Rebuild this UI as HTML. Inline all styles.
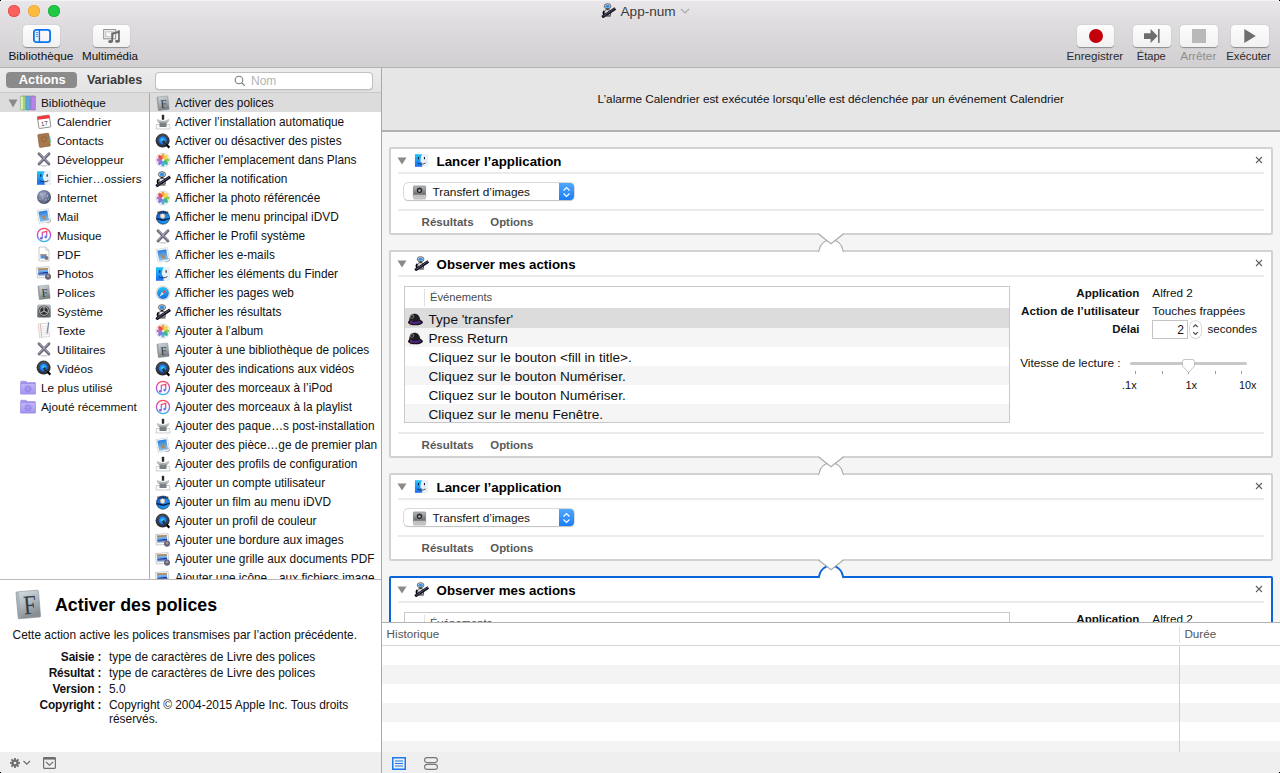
<!DOCTYPE html>
<html><head><meta charset="utf-8"><title>App-num</title>
<style>
html,body{margin:0;padding:0}
body{width:1280px;height:773px;position:relative;overflow:hidden;background:#fff;font-family:"Liberation Sans",sans-serif;-webkit-font-smoothing:antialiased}
.t{position:absolute;white-space:nowrap}
</style></head><body>
<svg width="0" height="0" style="position:absolute"><defs>
<linearGradient id="gF" x1="0" y1="0" x2="0.3" y2="1"><stop offset="0" stop-color="#d0d8dc"/><stop offset="0.6" stop-color="#a6aeb2"/><stop offset="1" stop-color="#7c8387"/></linearGradient>
<linearGradient id="gFinder" x1="0" y1="0" x2="0" y2="1"><stop offset="0" stop-color="#22c4fa"/><stop offset="1" stop-color="#1b6cf0"/></linearGradient>
<radialGradient id="gGlobe" cx="0.4" cy="0.35" r="0.7"><stop offset="0" stop-color="#a8b2cc"/><stop offset="0.6" stop-color="#6a7494"/><stop offset="1" stop-color="#3c4258"/></radialGradient>
<linearGradient id="gMail" x1="0" y1="0" x2="0" y2="1"><stop offset="0" stop-color="#2a7fd8"/><stop offset="1" stop-color="#8cc6f4"/></linearGradient>
<linearGradient id="gTunes" x1="0" y1="0" x2="0" y2="1"><stop offset="0" stop-color="#fa4a5a"/><stop offset="0.5" stop-color="#c24ae0"/><stop offset="1" stop-color="#28b8f0"/></linearGradient>
<radialGradient id="gQt" cx="0.5" cy="0.45" r="0.55"><stop offset="0" stop-color="#40e0ff"/><stop offset="0.7" stop-color="#1a70e8"/><stop offset="1" stop-color="#1a3a80"/></radialGradient>
<radialGradient id="gQtO" cx="0.5" cy="0.4" r="0.6"><stop offset="0" stop-color="#6a6e74"/><stop offset="1" stop-color="#1e2024"/></radialGradient>
<linearGradient id="gSys" x1="0" y1="0" x2="0" y2="1"><stop offset="0" stop-color="#b8c0c4"/><stop offset="1" stop-color="#5a6064"/></linearGradient>
<linearGradient id="gFolder" x1="0" y1="0" x2="0" y2="1"><stop offset="0" stop-color="#c0b6f8"/><stop offset="1" stop-color="#a496ee"/></linearGradient>
<linearGradient id="gSafari" x1="0" y1="0" x2="0" y2="1"><stop offset="0" stop-color="#1cc4f4"/><stop offset="1" stop-color="#1a6ae0"/></linearGradient>
<linearGradient id="gDvd" x1="0" y1="0" x2="1" y2="1"><stop offset="0" stop-color="#0a50e0"/><stop offset="1" stop-color="#20b0f8"/></linearGradient>
<linearGradient id="gInst" x1="0" y1="0" x2="0" y2="1"><stop offset="0" stop-color="#e8ecee"/><stop offset="1" stop-color="#8a9296"/></linearGradient>
<linearGradient id="gPrev" x1="0" y1="0" x2="0" y2="1"><stop offset="0" stop-color="#a8d0f8"/><stop offset="0.5" stop-color="#5a9ae8"/><stop offset="0.55" stop-color="#1a3a9a"/><stop offset="1" stop-color="#d8eef8"/></linearGradient>
<linearGradient id="gBF" x1="0" y1="0" x2="0.3" y2="1"><stop offset="0" stop-color="#d3dde3"/><stop offset="0.55" stop-color="#aeb8be"/><stop offset="1" stop-color="#868e93"/></linearGradient>
</defs></svg>

<div style="position:absolute;left:0px;top:0px;width:1280px;height:67px;background:linear-gradient(#e9e7e9,#dddbdd 40%,#d1cfd1);"></div>
<div style="position:absolute;left:0px;top:0px;width:1280px;height:1px;background:#f4f3f4;"></div>
<div style="position:absolute;left:0px;top:67px;width:1280px;height:1px;background:#b3b3b3;"></div>
<div style="position:absolute;left:8px;top:5px;width:12px;height:12px;border-radius:50%;background:#fc605c;box-shadow:inset 0 0 0 0.6px #e0443e;box-sizing:border-box;"></div>
<div style="position:absolute;left:28px;top:5px;width:12px;height:12px;border-radius:50%;background:#fdbc40;box-shadow:inset 0 0 0 0.6px #dea236;box-sizing:border-box;"></div>
<div style="position:absolute;left:48px;top:5px;width:12px;height:12px;border-radius:50%;background:#1fc845;box-shadow:inset 0 0 0 0.6px #14a82a;box-sizing:border-box;"></div>
<svg style="position:absolute;left:601px;top:3px" width="15" height="15" viewBox="0 0 16 16"><ellipse cx="7" cy="3.4" rx="3.6" ry="2.7" fill="#d8d8d8" stroke="#444" stroke-width="0.8"/><ellipse cx="7" cy="3.4" rx="2.3" ry="1.6" fill="#2b8ff0"/><rect x="5.8" y="6" width="2.4" height="1.4" fill="#111"/><path d="M4 9c0-1.2 1-1.8 3-1.8s3.2.6 3.2 1.8v4H4z" fill="#e8e8ee" stroke="#222" stroke-width="0.8"/><path d="M3.6 8.3c-1.4 1-1.6 3.4-.2 4.6" fill="none" stroke="#000" stroke-width="1.6"/><path d="M1.2 15.2L15.2 5.8" stroke="#0e0e18" stroke-width="3"/><path d="M2 14.3L14.6 5.8" stroke="#7a7ab0" stroke-width="0.7"/><path d="M4.5 14h6" stroke="#444" stroke-width="1"/></svg>
<div class="t" style="left:620.5px;top:5.19px;font-size:13.6px;line-height:13.6px;color:#3b3b3b;">App-num</div>
<svg style="position:absolute;left:680px;top:8px" width="10" height="6" viewBox="0 0 10 6"><path d="M1 1l4 4 4-4" fill="none" stroke="#a8a8a8" stroke-width="1.1"/></svg>
<div style="position:absolute;left:22.5px;top:25px;width:37.5px;height:22px;box-sizing:border-box;border-radius:4px;background:linear-gradient(#fdfdfd,#f1f1f1);box-shadow:0 0.5px 1px rgba(0,0,0,0.35);"></div>
<div style="position:absolute;left:92.5px;top:25px;width:37.5px;height:22px;box-sizing:border-box;border-radius:4px;background:linear-gradient(#fdfdfd,#f1f1f1);box-shadow:0 0.5px 1px rgba(0,0,0,0.35);"></div>
<svg style="position:absolute;left:33px;top:29px" width="18" height="14" viewBox="0 0 18 14"><rect x="0.9" y="0.9" width="16.2" height="12.2" rx="2.4" fill="none" stroke="#0a74f4" stroke-width="1.8"/><line x1="6.4" y1="1" x2="6.4" y2="13" stroke="#0a74f4" stroke-width="1.4"/><g stroke="#2a84f0" stroke-width="0.9" stroke-linecap="round"><line x1="3.2" y1="3.6" x2="4.6" y2="3.6"/><line x1="3.2" y1="5.6" x2="4.6" y2="5.6"/><line x1="3.2" y1="7.6" x2="4.6" y2="7.6"/></g></svg>
<svg style="position:absolute;left:100px;top:27px" width="22" height="17" viewBox="0 0 22 17"><rect x="3.7" y="2.6" width="12" height="9.2" fill="none" stroke="#8a8a8a" stroke-width="1"/><rect x="5.8" y="4.8" width="7.8" height="5" fill="none" stroke="#c0c0c0" stroke-width="1"/><path d="M11.3 5.6L19.8 3.2V6L11.3 8.3z" fill="#6a6a6a" stroke="#f2f2f2" stroke-width="0.4"/><rect x="11.3" y="6" width="1.8" height="8.6" fill="#6a6a6a"/><rect x="18.1" y="3.4" width="1.7" height="10.8" fill="#6a6a6a"/><ellipse cx="10.5" cy="14.6" rx="2.4" ry="1.5" fill="#6a6a6a"/><ellipse cx="17.4" cy="14.3" rx="2.4" ry="1.5" fill="#6a6a6a"/></svg>
<div class="t" style="left:8.5px;top:51.01px;font-size:11.8px;line-height:11.8px;color:#111;">Bibliothèque</div>
<div class="t" style="left:82px;top:50.48px;font-size:11.6px;line-height:11.6px;color:#111;">Multimédia</div>
<div style="position:absolute;left:1076.5px;top:25px;width:37.5px;height:22px;box-sizing:border-box;border-radius:4px;background:linear-gradient(#fdfdfd,#f1f1f1);box-shadow:0 0.5px 1px rgba(0,0,0,0.35);"></div>
<div style="position:absolute;left:1133px;top:25px;width:37.5px;height:22px;box-sizing:border-box;border-radius:4px;background:linear-gradient(#fdfdfd,#f1f1f1);box-shadow:0 0.5px 1px rgba(0,0,0,0.35);"></div>
<div style="position:absolute;left:1180px;top:25px;width:37.5px;height:22px;box-sizing:border-box;border-radius:4px;background:linear-gradient(#fdfdfd,#f1f1f1);box-shadow:0 0.5px 1px rgba(0,0,0,0.35);"></div>
<div style="position:absolute;left:1231px;top:25px;width:37.5px;height:22px;box-sizing:border-box;border-radius:4px;background:linear-gradient(#fdfdfd,#f1f1f1);box-shadow:0 0.5px 1px rgba(0,0,0,0.35);"></div>
<div style="position:absolute;left:1089px;top:29px;width:14px;height:14px;border-radius:50%;background:#c4000a;"></div>
<svg style="position:absolute;left:1143px;top:29px" width="17" height="14" viewBox="0 0 17 14"><path d="M1 4.2h6.6V0L14.6 7 7.6 14V9.9H1z" fill="#6e6e6e"/><rect x="15.2" y="0" width="1.3" height="14" fill="#555"/></svg>
<div style="position:absolute;left:1192px;top:29px;width:14px;height:14px;background:#b9b9b9;"></div>
<svg style="position:absolute;left:1243.5px;top:29px" width="12" height="14" viewBox="0 0 12 14"><path d="M0.3 0L11.8 7 0.3 14z" fill="#6e6e6e"/></svg>
<div class="t" style="left:1066.5px;top:50.48px;font-size:11.6px;line-height:11.6px;color:#2a2a2a;">Enregistrer</div>
<div class="t" style="left:1136.8px;top:50.90px;font-size:11.1px;line-height:11.1px;color:#2a2a2a;">Étape</div>
<div class="t" style="left:1180.3px;top:51.01px;font-size:11.8px;line-height:11.8px;color:#8e8e8e;">Arrêter</div>
<div class="t" style="left:1226.3px;top:50.73px;font-size:11.3px;line-height:11.3px;color:#2a2a2a;">Exécuter</div>
<div style="position:absolute;left:0px;top:68px;width:381px;height:24px;background:linear-gradient(#ececec,#e3e3e3);"></div>
<div style="position:absolute;left:0px;top:92px;width:381px;height:1px;background:#c9c9c9;"></div>
<div style="position:absolute;left:6px;top:72px;width:70.5px;height:16px;border-radius:4px;background:#8b8b8b;"></div>
<div class="t" style="left:18.8px;top:73.71px;font-size:12.8px;line-height:12.8px;color:#fff;font-weight:bold;">Actions</div>
<div class="t" style="left:86.9px;top:73.88px;font-size:12.6px;line-height:12.6px;color:#3a3a3a;font-weight:bold;">Variables</div>
<div style="position:absolute;left:154.5px;top:71.5px;width:218px;height:18px;box-sizing:border-box;border-radius:4px;background:#fff;border:0.5px solid #c0c0c0;box-shadow:0 0.5px 0.5px rgba(0,0,0,0.15);"></div>
<svg style="position:absolute;left:234px;top:75px" width="12" height="12" viewBox="0 0 12 12"><circle cx="5" cy="5" r="3.8" fill="none" stroke="#7a7a7a" stroke-width="1.1"/><line x1="7.8" y1="7.8" x2="10.8" y2="10.8" stroke="#7a7a7a" stroke-width="1.2"/></svg>
<div class="t" style="left:251px;top:74.84px;font-size:12px;line-height:12px;color:#b4b4b4;">Nom</div>
<div style="position:absolute;left:0px;top:93px;width:149px;height:486px;background:#fff;"></div>
<div style="position:absolute;left:149px;top:93px;width:1px;height:486px;background:#aaaaaa;"></div>
<div style="position:absolute;left:0px;top:93px;width:149px;height:19px;background:#dcdcdc;"></div>
<svg style="position:absolute;left:8px;top:99px" width="10" height="9" viewBox="0 0 10 9"><path d="M0.5 0.5h9L5 8.5z" fill="#8a8a8a"/></svg>
<svg style="position:absolute;left:20px;top:95px" width="16" height="16" viewBox="0 0 16 16"><rect x="0.8" y="1" width="5" height="14" rx="0.6" fill="#9ed57c" stroke="#6f9a52" stroke-width="0.5"/><rect x="1.1" y="1.5" width="1.6" height="13" fill="#eef5b0"/><rect x="6.2" y="1" width="4.2" height="14" rx="0.6" fill="#5ca6e4" stroke="#3c78b0" stroke-width="0.5"/><rect x="10.8" y="1" width="4.6" height="14" rx="0.6" fill="#b884e8" stroke="#8058b0" stroke-width="0.5"/><path d="M1 1.2h14.4" stroke="#999" stroke-width="0.8" stroke-dasharray="0.8 0.8"/></svg>
<div class="t" style="left:41px;top:97.81px;font-size:11.8px;line-height:11.8px;color:#111;">Bibliothèque</div>
<svg style="position:absolute;left:36px;top:113px" width="16" height="16" viewBox="0 0 16 16"><g transform="rotate(-8 8 8)"><rect x="2" y="2.8" width="12" height="12" rx="0.8" fill="#fff" stroke="#6a6a6a" stroke-width="0.7"/><rect x="2" y="2.8" width="12" height="3.2" fill="#f0383a"/><text x="8" y="12.8" font-size="6.2" text-anchor="middle" fill="#333" font-family="Liberation Sans">17</text></g></svg>
<div class="t" style="left:57px;top:116.81px;font-size:11.8px;line-height:11.8px;color:#111;">Calendrier</div>
<svg style="position:absolute;left:36px;top:132px" width="16" height="16" viewBox="0 0 16 16"><g transform="rotate(-8 8 8)"><rect x="2.5" y="1.8" width="11" height="13" rx="0.8" fill="#a8784c" stroke="#80583a" stroke-width="0.6"/><circle cx="8" cy="7.2" r="2.6" fill="none" stroke="#86603e" stroke-width="0.8"/><rect x="13" y="5.5" width="1.6" height="3" fill="#3ab0d8"/><rect x="13" y="8.5" width="1.6" height="3" fill="#58b868"/></g></svg>
<div class="t" style="left:57px;top:135.81px;font-size:11.8px;line-height:11.8px;color:#111;">Contacts</div>
<svg style="position:absolute;left:36px;top:151px" width="16" height="16" viewBox="0 0 16 16"><g stroke="#6a6878" stroke-width="2.8" stroke-linecap="round"><line x1="3" y1="2.8" x2="13" y2="13"/><line x1="13" y1="2.8" x2="3" y2="13"/></g><g stroke="#b8b6d0" stroke-width="0.9"><line x1="3.3" y1="2.5" x2="13.3" y2="12.6"/><line x1="12.7" y1="2.5" x2="2.7" y2="12.6"/></g><ellipse cx="8" cy="14.8" rx="4" ry="0.8" fill="#ccc"/></svg>
<div class="t" style="left:57px;top:154.81px;font-size:11.8px;line-height:11.8px;color:#111;">Développeur</div>
<svg style="position:absolute;left:36px;top:170px" width="16" height="16" viewBox="0 0 16 16"><rect x="1" y="1.2" width="14" height="13.5" fill="#eaf0f6"/><path d="M1 1.2h7.6c-1.4 3-2 6-1.6 8.3h1.2c-.3 1.8.1 3.6.8 5.2H1z" fill="url(#gFinder)"/><rect x="4.2" y="4.3" width="1.1" height="2.4" fill="#0d1830"/><rect x="10.6" y="4.3" width="1.1" height="2.4" fill="#0d1830"/><path d="M3.6 10.6c2.5 1.7 6.3 1.7 8.8 0" fill="none" stroke="#0d1830" stroke-width="0.8"/></svg>
<div class="t" style="left:57px;top:173.81px;font-size:11.8px;line-height:11.8px;color:#111;">Fichier…ossiers</div>
<svg style="position:absolute;left:36px;top:189px" width="16" height="16" viewBox="0 0 16 16"><circle cx="8" cy="8" r="7" fill="url(#gGlobe)"/><g fill="#e0e6f4" opacity="0.8"><circle cx="5" cy="5" r="0.7"/><circle cx="9" cy="4" r="0.6"/><circle cx="11.5" cy="7" r="0.7"/><circle cx="6.5" cy="9" r="0.6"/><circle cx="10" cy="11" r="0.7"/><circle cx="4" cy="10.5" r="0.5"/><circle cx="8" cy="13" r="0.5"/><circle cx="12.5" cy="10" r="0.5"/></g></svg>
<div class="t" style="left:57px;top:192.81px;font-size:11.8px;line-height:11.8px;color:#111;">Internet</div>
<svg style="position:absolute;left:36px;top:208px" width="16" height="16" viewBox="0 0 16 16"><g transform="rotate(-10 8 8)"><rect x="2" y="1.5" width="11.5" height="13" fill="#fff" stroke="#b0b8c0" stroke-width="0.6" stroke-dasharray="1 0.4"/><rect x="3.2" y="2.8" width="9" height="10.4" fill="url(#gMail)"/><path d="M5 6l3 2.5 2-1.5-1 3 2 2.5-3-1.5-2 1 .5-2.5z" fill="#b0885a"/></g><path d="M11 11c2 0 3.5.5 3.5 2s-2 2-4 1.5" fill="none" stroke="#999" stroke-width="0.7"/></svg>
<div class="t" style="left:57px;top:211.81px;font-size:11.8px;line-height:11.8px;color:#111;">Mail</div>
<svg style="position:absolute;left:36px;top:227px" width="16" height="16" viewBox="0 0 16 16"><circle cx="8" cy="8" r="6.6" fill="#fafafa" stroke="url(#gTunes)" stroke-width="1.3"/><path d="M6.3 11.2V5.4l4.4-1.1v5.8" fill="none" stroke="url(#gTunes)" stroke-width="1.2"/><circle cx="5.3" cy="11.2" r="1.3" fill="#9a50e0"/><circle cx="9.7" cy="10.1" r="1.3" fill="#5a80f0"/></svg>
<div class="t" style="left:57px;top:230.81px;font-size:11.8px;line-height:11.8px;color:#111;">Musique</div>
<svg style="position:absolute;left:36px;top:246px" width="16" height="16" viewBox="0 0 16 16"><path d="M3 1h6.8L13 4.2V15H3z" fill="#fff" stroke="#a8a8a8" stroke-width="0.6"/><path d="M9.8 1v3.2H13" fill="#eee" stroke="#a8a8a8" stroke-width="0.5"/><rect x="4.5" y="8" width="6" height="4.5" fill="#5a8ad8"/><rect x="4.5" y="8" width="6" height="1.2" fill="#c09868"/><circle cx="10.5" cy="12" r="2" fill="#777"/></svg>
<div class="t" style="left:57px;top:249.81px;font-size:11.8px;line-height:11.8px;color:#111;">PDF</div>
<svg style="position:absolute;left:36px;top:265px" width="16" height="16" viewBox="0 0 16 16"><g transform="rotate(-4 8 8)"><rect x="1" y="2" width="12.5" height="10.5" fill="#fff" stroke="#aaa" stroke-width="0.6"/><rect x="2.2" y="3.2" width="10" height="8" fill="url(#gPrev)"/><rect x="2.2" y="3.2" width="10" height="1.6" fill="#b08850"/></g><circle cx="12" cy="11.8" r="3" fill="#6a6a6a"/><circle cx="12" cy="11" r="2" fill="#b89078" stroke="#3a5aa0" stroke-width="0.8"/></svg>
<div class="t" style="left:57px;top:268.81px;font-size:11.8px;line-height:11.8px;color:#111;">Photos</div>
<svg style="position:absolute;left:36px;top:284px" width="16" height="16" viewBox="0 0 16 16"><g transform="rotate(-6 8 8)"><rect x="2.5" y="1.5" width="11" height="13.5" rx="0.6" fill="url(#gF)" stroke="#7e8588" stroke-width="0.4"/><rect x="2.5" y="1.5" width="1.4" height="13.5" fill="#8e969a" opacity="0.7"/><text x="8.6" y="12.6" font-size="11" text-anchor="middle" fill="#2b3336" font-family="Liberation Serif">F</text></g></svg>
<div class="t" style="left:57px;top:287.81px;font-size:11.8px;line-height:11.8px;color:#111;">Polices</div>
<svg style="position:absolute;left:36px;top:303px" width="16" height="16" viewBox="0 0 16 16"><rect x="1.2" y="1.5" width="13.6" height="13" rx="1.5" fill="url(#gSys)"/><circle cx="8" cy="8" r="5.6" fill="#2a2c2e"/><circle cx="8" cy="8" r="4.4" fill="none" stroke="#a8aaac" stroke-width="1.3"/><path d="M8 8V4M8 8l3.5 2M8 8l-3.5 2" stroke="#a8aaac" stroke-width="1.2"/></svg>
<div class="t" style="left:57px;top:306.81px;font-size:11.8px;line-height:11.8px;color:#111;">Système</div>
<svg style="position:absolute;left:36px;top:322px" width="16" height="16" viewBox="0 0 16 16"><g transform="rotate(-6 8 8)"><rect x="2.8" y="1.5" width="10" height="13.5" fill="#fbfbfb" stroke="#b8b8b8" stroke-width="0.5"/><g stroke="#d6d6d6" stroke-width="0.5"><line x1="3" y1="4.5" x2="12.6" y2="4.5"/><line x1="3" y1="6.5" x2="12.6" y2="6.5"/><line x1="3" y1="8.5" x2="12.6" y2="8.5"/><line x1="3" y1="10.5" x2="12.6" y2="10.5"/><line x1="3" y1="12.5" x2="12.6" y2="12.5"/></g><line x1="5" y1="1.5" x2="5" y2="15" stroke="#f08a8a" stroke-width="0.6"/><path d="M13.5 1l-3 11" stroke="#6a88a8" stroke-width="1.1"/></g></svg>
<div class="t" style="left:57px;top:325.81px;font-size:11.8px;line-height:11.8px;color:#111;">Texte</div>
<svg style="position:absolute;left:36px;top:341px" width="16" height="16" viewBox="0 0 16 16"><g stroke="#6a6878" stroke-width="2.8" stroke-linecap="round"><line x1="3" y1="2.8" x2="13" y2="13"/><line x1="13" y1="2.8" x2="3" y2="13"/></g><g stroke="#b8b6d0" stroke-width="0.9"><line x1="3.3" y1="2.5" x2="13.3" y2="12.6"/><line x1="12.7" y1="2.5" x2="2.7" y2="12.6"/></g><ellipse cx="8" cy="14.8" rx="4" ry="0.8" fill="#ccc"/></svg>
<div class="t" style="left:57px;top:344.81px;font-size:11.8px;line-height:11.8px;color:#111;">Utilitaires</div>
<svg style="position:absolute;left:36px;top:360px" width="16" height="16" viewBox="0 0 16 16"><circle cx="7.6" cy="7.6" r="7" fill="url(#gQtO)"/><circle cx="7.6" cy="7.6" r="4.4" fill="url(#gQt)"/><path d="M7.8 7.8l2.4 3.4" stroke="#2e3236" stroke-width="2.4"/><path d="M11.4 11.8l3 2.8" stroke="#000" stroke-width="2.2"/></svg>
<div class="t" style="left:57px;top:363.81px;font-size:11.8px;line-height:11.8px;color:#111;">Vidéos</div>
<svg style="position:absolute;left:20px;top:379px" width="16" height="16" viewBox="0 0 16 16"><path d="M0.8 2.2h5.4l1.1 1.3h7.9V15H0.8z" fill="#a597ee" stroke="#8e80e0" stroke-width="0.5"/><rect x="0.8" y="4.6" width="14.4" height="10.4" fill="url(#gFolder)" stroke="#8e80e0" stroke-width="0.5"/><circle cx="8" cy="9.8" r="2.8" fill="none" stroke="#8a7ce6" stroke-width="1.4" stroke-dasharray="1.1 0.7"/><circle cx="8" cy="9.8" r="1.4" fill="none" stroke="#8a7ce6" stroke-width="0.7"/></svg>
<div class="t" style="left:41px;top:382.81px;font-size:11.8px;line-height:11.8px;color:#111;">Le plus utilisé</div>
<svg style="position:absolute;left:20px;top:398px" width="16" height="16" viewBox="0 0 16 16"><path d="M0.8 2.2h5.4l1.1 1.3h7.9V15H0.8z" fill="#a597ee" stroke="#8e80e0" stroke-width="0.5"/><rect x="0.8" y="4.6" width="14.4" height="10.4" fill="url(#gFolder)" stroke="#8e80e0" stroke-width="0.5"/><circle cx="8" cy="9.8" r="2.8" fill="none" stroke="#8a7ce6" stroke-width="1.4" stroke-dasharray="1.1 0.7"/><circle cx="8" cy="9.8" r="1.4" fill="none" stroke="#8a7ce6" stroke-width="0.7"/></svg>
<div class="t" style="left:41px;top:401.81px;font-size:11.8px;line-height:11.8px;color:#111;">Ajouté récemment</div>
<div style="position:absolute;left:150px;top:93px;width:231px;height:486px;background:#fff;"></div>
<div style="position:absolute;left:150px;top:93px;width:231px;height:19px;background:#dcdcdc;"></div>
<div style="position:absolute;left:150px;top:93px;width:231px;height:486px;overflow:hidden">
<svg style="position:absolute;left:5px;top:2px" width="16" height="16" viewBox="0 0 16 16"><g transform="rotate(-6 8 8)"><rect x="2.5" y="1.5" width="11" height="13.5" rx="0.6" fill="url(#gF)" stroke="#7e8588" stroke-width="0.4"/><rect x="2.5" y="1.5" width="1.4" height="13.5" fill="#8e969a" opacity="0.7"/><text x="8.6" y="12.6" font-size="11" text-anchor="middle" fill="#2b3336" font-family="Liberation Serif">F</text></g></svg>
<div class="t" style="left:25px;top:4.77px;font-size:11.85px;line-height:11.85px;color:#111;">Activer des polices</div>
<svg style="position:absolute;left:5px;top:21px" width="16" height="16" viewBox="0 0 16 16"><path d="M1.5 10.5h13l0.5 4.5H1z" fill="#fcfcfc" stroke="#a0a0a0" stroke-width="0.5"/><rect x="4.5" y="7" width="7" height="6" fill="#7a8084"/><rect x="4.5" y="7" width="7" height="2" fill="#a8aeb2"/><path d="M2 5.5L8 7.5l6-2-1 2.5L8 9.5 3 8z" fill="url(#gInst)" stroke="#888" stroke-width="0.4"/><rect x="6.8" y="0.8" width="2.4" height="5" rx="0.6" fill="#2a2a2a"/></svg>
<div class="t" style="left:25px;top:23.77px;font-size:11.85px;line-height:11.85px;color:#111;">Activer l’installation automatique</div>
<svg style="position:absolute;left:5px;top:40px" width="16" height="16" viewBox="0 0 16 16"><circle cx="7.6" cy="7.6" r="7" fill="url(#gQtO)"/><circle cx="7.6" cy="7.6" r="4.4" fill="url(#gQt)"/><path d="M7.8 7.8l2.4 3.4" stroke="#2e3236" stroke-width="2.4"/><path d="M11.4 11.8l3 2.8" stroke="#000" stroke-width="2.2"/></svg>
<div class="t" style="left:25px;top:42.77px;font-size:11.85px;line-height:11.85px;color:#111;">Activer ou désactiver des pistes</div>
<svg style="position:absolute;left:5px;top:59px" width="16" height="16" viewBox="0 0 16 16"><circle cx="8" cy="8" r="7" fill="#f6f6f6" stroke="#c8c8c8" stroke-width="0.6"/><g opacity="0.9"><ellipse cx="8" cy="4.3" rx="1.8" ry="2.7" fill="#f29a2e"/><ellipse cx="8" cy="11.7" rx="1.8" ry="2.7" fill="#3aa8e8"/><ellipse cx="4.3" cy="8" rx="2.7" ry="1.8" fill="#b060c8"/><ellipse cx="11.7" cy="8" rx="2.7" ry="1.8" fill="#7ac83a"/><ellipse cx="5.4" cy="5.4" rx="1.8" ry="2.7" fill="#e83a38" transform="rotate(-45 5.4 5.4)"/><ellipse cx="10.6" cy="5.4" rx="1.8" ry="2.7" fill="#f4d03a" transform="rotate(45 10.6 5.4)"/><ellipse cx="5.4" cy="10.6" rx="1.8" ry="2.7" fill="#7a6ad8" transform="rotate(45 5.4 10.6)"/><ellipse cx="10.6" cy="10.6" rx="1.8" ry="2.7" fill="#2ab088" transform="rotate(-45 10.6 10.6)"/></g></svg>
<div class="t" style="left:25px;top:61.77px;font-size:11.85px;line-height:11.85px;color:#111;">Afficher l’emplacement dans Plans</div>
<svg style="position:absolute;left:5px;top:78px" width="16" height="16" viewBox="0 0 16 16"><ellipse cx="7" cy="3.4" rx="3.6" ry="2.7" fill="#d8d8d8" stroke="#444" stroke-width="0.8"/><ellipse cx="7" cy="3.4" rx="2.3" ry="1.6" fill="#2b8ff0"/><rect x="5.8" y="6" width="2.4" height="1.4" fill="#111"/><path d="M4 9c0-1.2 1-1.8 3-1.8s3.2.6 3.2 1.8v4H4z" fill="#e8e8ee" stroke="#222" stroke-width="0.8"/><path d="M3.6 8.3c-1.4 1-1.6 3.4-.2 4.6" fill="none" stroke="#000" stroke-width="1.6"/><path d="M1.2 15.2L15.2 5.8" stroke="#0e0e18" stroke-width="3"/><path d="M2 14.3L14.6 5.8" stroke="#7a7ab0" stroke-width="0.7"/><path d="M4.5 14h6" stroke="#444" stroke-width="1"/></svg>
<div class="t" style="left:25px;top:80.77px;font-size:11.85px;line-height:11.85px;color:#111;">Afficher la notification</div>
<svg style="position:absolute;left:5px;top:97px" width="16" height="16" viewBox="0 0 16 16"><circle cx="8" cy="8" r="7" fill="#f6f6f6" stroke="#c8c8c8" stroke-width="0.6"/><g opacity="0.9"><ellipse cx="8" cy="4.3" rx="1.8" ry="2.7" fill="#f29a2e"/><ellipse cx="8" cy="11.7" rx="1.8" ry="2.7" fill="#3aa8e8"/><ellipse cx="4.3" cy="8" rx="2.7" ry="1.8" fill="#b060c8"/><ellipse cx="11.7" cy="8" rx="2.7" ry="1.8" fill="#7ac83a"/><ellipse cx="5.4" cy="5.4" rx="1.8" ry="2.7" fill="#e83a38" transform="rotate(-45 5.4 5.4)"/><ellipse cx="10.6" cy="5.4" rx="1.8" ry="2.7" fill="#f4d03a" transform="rotate(45 10.6 5.4)"/><ellipse cx="5.4" cy="10.6" rx="1.8" ry="2.7" fill="#7a6ad8" transform="rotate(45 5.4 10.6)"/><ellipse cx="10.6" cy="10.6" rx="1.8" ry="2.7" fill="#2ab088" transform="rotate(-45 10.6 10.6)"/></g></svg>
<div class="t" style="left:25px;top:99.77px;font-size:11.85px;line-height:11.85px;color:#111;">Afficher la photo référencée</div>
<svg style="position:absolute;left:5px;top:116px" width="16" height="16" viewBox="0 0 16 16"><circle cx="8" cy="8.6" r="6.6" fill="url(#gDvd)" stroke="#222" stroke-width="0.6"/><path d="M1.6 10c3-1 5 2 8 1s4-2 5-1" fill="none" stroke="#0a1a40" stroke-width="1.4"/><circle cx="7.6" cy="7" r="2.4" fill="#e8eef4" stroke="#e0a060" stroke-width="0.6"/><path d="M2.5 3.5h11" stroke="#222" stroke-width="2.2" stroke-dasharray="1.2 0.6"/></svg>
<div class="t" style="left:25px;top:118.77px;font-size:11.85px;line-height:11.85px;color:#111;">Afficher le menu principal iDVD</div>
<svg style="position:absolute;left:5px;top:135px" width="16" height="16" viewBox="0 0 16 16"><g stroke="#6a6878" stroke-width="2.8" stroke-linecap="round"><line x1="3" y1="2.8" x2="13" y2="13"/><line x1="13" y1="2.8" x2="3" y2="13"/></g><g stroke="#b8b6d0" stroke-width="0.9"><line x1="3.3" y1="2.5" x2="13.3" y2="12.6"/><line x1="12.7" y1="2.5" x2="2.7" y2="12.6"/></g><ellipse cx="8" cy="14.8" rx="4" ry="0.8" fill="#ccc"/></svg>
<div class="t" style="left:25px;top:137.77px;font-size:11.85px;line-height:11.85px;color:#111;">Afficher le Profil système</div>
<svg style="position:absolute;left:5px;top:154px" width="16" height="16" viewBox="0 0 16 16"><g transform="rotate(-10 8 8)"><rect x="2" y="1.5" width="11.5" height="13" fill="#fff" stroke="#b0b8c0" stroke-width="0.6" stroke-dasharray="1 0.4"/><rect x="3.2" y="2.8" width="9" height="10.4" fill="url(#gMail)"/><path d="M5 6l3 2.5 2-1.5-1 3 2 2.5-3-1.5-2 1 .5-2.5z" fill="#b0885a"/></g><path d="M11 11c2 0 3.5.5 3.5 2s-2 2-4 1.5" fill="none" stroke="#999" stroke-width="0.7"/></svg>
<div class="t" style="left:25px;top:156.77px;font-size:11.85px;line-height:11.85px;color:#111;">Afficher les e-mails</div>
<svg style="position:absolute;left:5px;top:173px" width="16" height="16" viewBox="0 0 16 16"><rect x="1" y="1.2" width="14" height="13.5" fill="#eaf0f6"/><path d="M1 1.2h7.6c-1.4 3-2 6-1.6 8.3h1.2c-.3 1.8.1 3.6.8 5.2H1z" fill="url(#gFinder)"/><rect x="4.2" y="4.3" width="1.1" height="2.4" fill="#0d1830"/><rect x="10.6" y="4.3" width="1.1" height="2.4" fill="#0d1830"/><path d="M3.6 10.6c2.5 1.7 6.3 1.7 8.8 0" fill="none" stroke="#0d1830" stroke-width="0.8"/></svg>
<div class="t" style="left:25px;top:175.77px;font-size:11.85px;line-height:11.85px;color:#111;">Afficher les éléments du Finder</div>
<svg style="position:absolute;left:5px;top:192px" width="16" height="16" viewBox="0 0 16 16"><circle cx="8" cy="8" r="7" fill="#e8e8e8" stroke="#c0c0c0" stroke-width="0.5"/><circle cx="8" cy="8" r="5.9" fill="url(#gSafari)"/><path d="M12 4L7.2 7.2 4 12l4.8-3.2z" fill="#f4f4f4"/><path d="M12 4L8.8 8.8 7.2 7.2z" fill="#f22a2a"/></svg>
<div class="t" style="left:25px;top:194.77px;font-size:11.85px;line-height:11.85px;color:#111;">Afficher les pages web</div>
<svg style="position:absolute;left:5px;top:211px" width="16" height="16" viewBox="0 0 16 16"><ellipse cx="7" cy="3.4" rx="3.6" ry="2.7" fill="#d8d8d8" stroke="#444" stroke-width="0.8"/><ellipse cx="7" cy="3.4" rx="2.3" ry="1.6" fill="#2b8ff0"/><rect x="5.8" y="6" width="2.4" height="1.4" fill="#111"/><path d="M4 9c0-1.2 1-1.8 3-1.8s3.2.6 3.2 1.8v4H4z" fill="#e8e8ee" stroke="#222" stroke-width="0.8"/><path d="M3.6 8.3c-1.4 1-1.6 3.4-.2 4.6" fill="none" stroke="#000" stroke-width="1.6"/><path d="M1.2 15.2L15.2 5.8" stroke="#0e0e18" stroke-width="3"/><path d="M2 14.3L14.6 5.8" stroke="#7a7ab0" stroke-width="0.7"/><path d="M4.5 14h6" stroke="#444" stroke-width="1"/></svg>
<div class="t" style="left:25px;top:213.77px;font-size:11.85px;line-height:11.85px;color:#111;">Afficher les résultats</div>
<svg style="position:absolute;left:5px;top:230px" width="16" height="16" viewBox="0 0 16 16"><circle cx="8" cy="8" r="7" fill="#f6f6f6" stroke="#c8c8c8" stroke-width="0.6"/><g opacity="0.9"><ellipse cx="8" cy="4.3" rx="1.8" ry="2.7" fill="#f29a2e"/><ellipse cx="8" cy="11.7" rx="1.8" ry="2.7" fill="#3aa8e8"/><ellipse cx="4.3" cy="8" rx="2.7" ry="1.8" fill="#b060c8"/><ellipse cx="11.7" cy="8" rx="2.7" ry="1.8" fill="#7ac83a"/><ellipse cx="5.4" cy="5.4" rx="1.8" ry="2.7" fill="#e83a38" transform="rotate(-45 5.4 5.4)"/><ellipse cx="10.6" cy="5.4" rx="1.8" ry="2.7" fill="#f4d03a" transform="rotate(45 10.6 5.4)"/><ellipse cx="5.4" cy="10.6" rx="1.8" ry="2.7" fill="#7a6ad8" transform="rotate(45 5.4 10.6)"/><ellipse cx="10.6" cy="10.6" rx="1.8" ry="2.7" fill="#2ab088" transform="rotate(-45 10.6 10.6)"/></g></svg>
<div class="t" style="left:25px;top:232.77px;font-size:11.85px;line-height:11.85px;color:#111;">Ajouter à l’album</div>
<svg style="position:absolute;left:5px;top:249px" width="16" height="16" viewBox="0 0 16 16"><g transform="rotate(-6 8 8)"><rect x="2.5" y="1.5" width="11" height="13.5" rx="0.6" fill="url(#gF)" stroke="#7e8588" stroke-width="0.4"/><rect x="2.5" y="1.5" width="1.4" height="13.5" fill="#8e969a" opacity="0.7"/><text x="8.6" y="12.6" font-size="11" text-anchor="middle" fill="#2b3336" font-family="Liberation Serif">F</text></g></svg>
<div class="t" style="left:25px;top:251.77px;font-size:11.85px;line-height:11.85px;color:#111;">Ajouter à une bibliothèque de polices</div>
<svg style="position:absolute;left:5px;top:268px" width="16" height="16" viewBox="0 0 16 16"><circle cx="7.6" cy="7.6" r="7" fill="url(#gQtO)"/><circle cx="7.6" cy="7.6" r="4.4" fill="url(#gQt)"/><path d="M7.8 7.8l2.4 3.4" stroke="#2e3236" stroke-width="2.4"/><path d="M11.4 11.8l3 2.8" stroke="#000" stroke-width="2.2"/></svg>
<div class="t" style="left:25px;top:270.77px;font-size:11.85px;line-height:11.85px;color:#111;">Ajouter des indications aux vidéos</div>
<svg style="position:absolute;left:5px;top:287px" width="16" height="16" viewBox="0 0 16 16"><circle cx="8" cy="8" r="6.6" fill="#fafafa" stroke="url(#gTunes)" stroke-width="1.3"/><path d="M6.3 11.2V5.4l4.4-1.1v5.8" fill="none" stroke="url(#gTunes)" stroke-width="1.2"/><circle cx="5.3" cy="11.2" r="1.3" fill="#9a50e0"/><circle cx="9.7" cy="10.1" r="1.3" fill="#5a80f0"/></svg>
<div class="t" style="left:25px;top:289.77px;font-size:11.85px;line-height:11.85px;color:#111;">Ajouter des morceaux à l’iPod</div>
<svg style="position:absolute;left:5px;top:306px" width="16" height="16" viewBox="0 0 16 16"><circle cx="8" cy="8" r="6.6" fill="#fafafa" stroke="url(#gTunes)" stroke-width="1.3"/><path d="M6.3 11.2V5.4l4.4-1.1v5.8" fill="none" stroke="url(#gTunes)" stroke-width="1.2"/><circle cx="5.3" cy="11.2" r="1.3" fill="#9a50e0"/><circle cx="9.7" cy="10.1" r="1.3" fill="#5a80f0"/></svg>
<div class="t" style="left:25px;top:308.77px;font-size:11.85px;line-height:11.85px;color:#111;">Ajouter des morceaux à la playlist</div>
<svg style="position:absolute;left:5px;top:325px" width="16" height="16" viewBox="0 0 16 16"><path d="M1.5 10.5h13l0.5 4.5H1z" fill="#fcfcfc" stroke="#a0a0a0" stroke-width="0.5"/><rect x="4.5" y="7" width="7" height="6" fill="#7a8084"/><rect x="4.5" y="7" width="7" height="2" fill="#a8aeb2"/><path d="M2 5.5L8 7.5l6-2-1 2.5L8 9.5 3 8z" fill="url(#gInst)" stroke="#888" stroke-width="0.4"/><rect x="6.8" y="0.8" width="2.4" height="5" rx="0.6" fill="#2a2a2a"/></svg>
<div class="t" style="left:25px;top:327.77px;font-size:11.85px;line-height:11.85px;color:#111;">Ajouter des paque…s post-installation</div>
<svg style="position:absolute;left:5px;top:344px" width="16" height="16" viewBox="0 0 16 16"><g transform="rotate(-10 8 8)"><rect x="2" y="1.5" width="11.5" height="13" fill="#fff" stroke="#b0b8c0" stroke-width="0.6" stroke-dasharray="1 0.4"/><rect x="3.2" y="2.8" width="9" height="10.4" fill="url(#gMail)"/><path d="M5 6l3 2.5 2-1.5-1 3 2 2.5-3-1.5-2 1 .5-2.5z" fill="#b0885a"/></g><path d="M11 11c2 0 3.5.5 3.5 2s-2 2-4 1.5" fill="none" stroke="#999" stroke-width="0.7"/></svg>
<div class="t" style="left:25px;top:346.77px;font-size:11.85px;line-height:11.85px;color:#111;">Ajouter des pièce…ge de premier plan</div>
<svg style="position:absolute;left:5px;top:363px" width="16" height="16" viewBox="0 0 16 16"><path d="M1.5 10.5h13l0.5 4.5H1z" fill="#fcfcfc" stroke="#a0a0a0" stroke-width="0.5"/><rect x="4.5" y="7" width="7" height="6" fill="#7a8084"/><rect x="4.5" y="7" width="7" height="2" fill="#a8aeb2"/><path d="M2 5.5L8 7.5l6-2-1 2.5L8 9.5 3 8z" fill="url(#gInst)" stroke="#888" stroke-width="0.4"/><rect x="6.8" y="0.8" width="2.4" height="5" rx="0.6" fill="#2a2a2a"/></svg>
<div class="t" style="left:25px;top:365.77px;font-size:11.85px;line-height:11.85px;color:#111;">Ajouter des profils de configuration</div>
<svg style="position:absolute;left:5px;top:382px" width="16" height="16" viewBox="0 0 16 16"><path d="M1.5 10.5h13l0.5 4.5H1z" fill="#fcfcfc" stroke="#a0a0a0" stroke-width="0.5"/><rect x="4.5" y="7" width="7" height="6" fill="#7a8084"/><rect x="4.5" y="7" width="7" height="2" fill="#a8aeb2"/><path d="M2 5.5L8 7.5l6-2-1 2.5L8 9.5 3 8z" fill="url(#gInst)" stroke="#888" stroke-width="0.4"/><rect x="6.8" y="0.8" width="2.4" height="5" rx="0.6" fill="#2a2a2a"/></svg>
<div class="t" style="left:25px;top:384.77px;font-size:11.85px;line-height:11.85px;color:#111;">Ajouter un compte utilisateur</div>
<svg style="position:absolute;left:5px;top:401px" width="16" height="16" viewBox="0 0 16 16"><circle cx="8" cy="8.6" r="6.6" fill="url(#gDvd)" stroke="#222" stroke-width="0.6"/><path d="M1.6 10c3-1 5 2 8 1s4-2 5-1" fill="none" stroke="#0a1a40" stroke-width="1.4"/><circle cx="7.6" cy="7" r="2.4" fill="#e8eef4" stroke="#e0a060" stroke-width="0.6"/><path d="M2.5 3.5h11" stroke="#222" stroke-width="2.2" stroke-dasharray="1.2 0.6"/></svg>
<div class="t" style="left:25px;top:403.77px;font-size:11.85px;line-height:11.85px;color:#111;">Ajouter un film au menu iDVD</div>
<svg style="position:absolute;left:5px;top:420px" width="16" height="16" viewBox="0 0 16 16"><circle cx="7.6" cy="7.6" r="7" fill="url(#gQtO)"/><circle cx="7.6" cy="7.6" r="4.4" fill="url(#gQt)"/><path d="M7.8 7.8l2.4 3.4" stroke="#2e3236" stroke-width="2.4"/><path d="M11.4 11.8l3 2.8" stroke="#000" stroke-width="2.2"/></svg>
<div class="t" style="left:25px;top:422.77px;font-size:11.85px;line-height:11.85px;color:#111;">Ajouter un profil de couleur</div>
<svg style="position:absolute;left:5px;top:439px" width="16" height="16" viewBox="0 0 16 16"><g transform="rotate(-4 8 8)"><rect x="1" y="2" width="12.5" height="10.5" fill="#fff" stroke="#aaa" stroke-width="0.6"/><rect x="2.2" y="3.2" width="10" height="8" fill="url(#gPrev)"/><rect x="2.2" y="3.2" width="10" height="1.6" fill="#b08850"/></g><circle cx="12" cy="11.8" r="3" fill="#6a6a6a"/><circle cx="12" cy="11" r="2" fill="#b89078" stroke="#3a5aa0" stroke-width="0.8"/></svg>
<div class="t" style="left:25px;top:441.77px;font-size:11.85px;line-height:11.85px;color:#111;">Ajouter une bordure aux images</div>
<svg style="position:absolute;left:5px;top:458px" width="16" height="16" viewBox="0 0 16 16"><g transform="rotate(-4 8 8)"><rect x="1" y="2" width="12.5" height="10.5" fill="#fff" stroke="#aaa" stroke-width="0.6"/><rect x="2.2" y="3.2" width="10" height="8" fill="url(#gPrev)"/><rect x="2.2" y="3.2" width="10" height="1.6" fill="#b08850"/></g><circle cx="12" cy="11.8" r="3" fill="#6a6a6a"/><circle cx="12" cy="11" r="2" fill="#b89078" stroke="#3a5aa0" stroke-width="0.8"/></svg>
<div class="t" style="left:25px;top:460.77px;font-size:11.85px;line-height:11.85px;color:#111;">Ajouter une grille aux documents PDF</div>
<svg style="position:absolute;left:5px;top:477px" width="16" height="16" viewBox="0 0 16 16"><g transform="rotate(-4 8 8)"><rect x="1" y="2" width="12.5" height="10.5" fill="#fff" stroke="#aaa" stroke-width="0.6"/><rect x="2.2" y="3.2" width="10" height="8" fill="url(#gPrev)"/><rect x="2.2" y="3.2" width="10" height="1.6" fill="#b08850"/></g><circle cx="12" cy="11.8" r="3" fill="#6a6a6a"/><circle cx="12" cy="11" r="2" fill="#b89078" stroke="#3a5aa0" stroke-width="0.8"/></svg>
<div class="t" style="left:25px;top:479.77px;font-size:11.85px;line-height:11.85px;color:#111;">Ajouter une icône…aux fichiers image</div>
</div>
<div style="position:absolute;left:0px;top:579px;width:381px;height:1px;background:#b9b9b9;"></div>
<div style="position:absolute;left:0px;top:580px;width:381px;height:172px;background:#fff;"></div>
<svg style="position:absolute;left:14px;top:588px" width="28" height="32" viewBox="0 0 28 32"><g transform="rotate(-5 14 16)"><rect x="3" y="3" width="22.5" height="27" rx="1" fill="url(#gBF)" stroke="#8a9297" stroke-width="0.6"/><rect x="3" y="3" width="3" height="27" fill="#9aa4aa" opacity="0.6"/><text x="15.8" y="26.2" font-size="27" text-anchor="middle" fill="#34403f" font-family="Liberation Serif" transform="scale(0.85 1) translate(2.6 0)">F</text></g></svg>
<div class="t" style="left:55px;top:597.23px;font-size:17.8px;line-height:17.8px;color:#000;font-weight:bold;">Activer des polices</div>
<div class="t" style="left:12.6px;top:629.53px;font-size:11.9px;line-height:11.9px;color:#111;">Cette action active les polices transmises par l’action précédente.</div>
<div class="t" style="right:1178.7px;top:651.93px;font-size:11.9px;line-height:11.9px;color:#111;font-weight:bold;letter-spacing:-0.15px;">Saisie :</div>
<div class="t" style="left:109px;top:651.93px;font-size:11.9px;line-height:11.9px;color:#111;">type de caractères de Livre des polices</div>
<div class="t" style="right:1178.7px;top:667.93px;font-size:11.9px;line-height:11.9px;color:#111;font-weight:bold;letter-spacing:-0.15px;">Résultat :</div>
<div class="t" style="left:109px;top:667.93px;font-size:11.9px;line-height:11.9px;color:#111;">type de caractères de Livre des polices</div>
<div class="t" style="right:1178.7px;top:684.13px;font-size:11.9px;line-height:11.9px;color:#111;font-weight:bold;letter-spacing:-0.15px;">Version :</div>
<div class="t" style="left:109px;top:684.13px;font-size:11.9px;line-height:11.9px;color:#111;">5.0</div>
<div class="t" style="right:1178.7px;top:700.13px;font-size:11.9px;line-height:11.9px;color:#111;font-weight:bold;letter-spacing:-0.15px;">Copyright :</div>
<div class="t" style="left:109px;top:700.13px;font-size:11.9px;line-height:11.9px;color:#111;">Copyright © 2004-2015 Apple Inc. Tous droits</div>
<div class="t" style="left:109px;top:714.23px;font-size:11.9px;line-height:11.9px;color:#111;">réservés.</div>
<div style="position:absolute;left:0px;top:752px;width:381px;height:21px;background:#efefef;"></div>
<svg style="position:absolute;left:10px;top:758px" width="21" height="10" viewBox="0 0 21 10"><g fill="#6f6f6f"><rect x="4.1" y="0" width="1.8" height="10" transform="rotate(0 5 5)"/><rect x="4.1" y="0" width="1.8" height="10" transform="rotate(45 5 5)"/><rect x="4.1" y="0" width="1.8" height="10" transform="rotate(90 5 5)"/><rect x="4.1" y="0" width="1.8" height="10" transform="rotate(135 5 5)"/><circle cx="5" cy="5" r="3.6"/></g><circle cx="5" cy="5" r="1.3" fill="#efefef"/><path d="M13.5 3l3.3 3.2L20 3" fill="none" stroke="#6f6f6f" stroke-width="1.2"/></svg>
<svg style="position:absolute;left:43px;top:757px" width="13" height="12" viewBox="0 0 13 12"><rect x="0.6" y="0.6" width="11.8" height="10.8" rx="0.8" fill="none" stroke="#6f6f6f" stroke-width="1.2"/><rect x="0.6" y="0.6" width="11.8" height="2" fill="#6f6f6f"/><path d="M3 5l3.5 3.3L10 5" fill="none" stroke="#6f6f6f" stroke-width="1.2"/></svg>
<div style="position:absolute;left:381px;top:68px;width:1px;height:705px;background:#a9a9a9;"></div>
<div style="position:absolute;left:382px;top:68px;width:898px;height:62px;background:#e6e6e6;"></div>
<div class="t" style="left:597.6px;top:93.33px;font-size:11.78px;line-height:11.78px;color:#111;">L’alarme Calendrier est exécutée lorsqu’elle est déclenchée par un événement Calendrier</div>
<div style="position:absolute;left:382px;top:131px;width:898px;height:491px;background:#f5f5f5;"></div>
<div style="position:absolute;left:0;top:131px;width:1280px;height:491px;overflow:hidden">
<div style="position:absolute;left:389px;top:16px;width:884px;height:88px;box-sizing:border-box;background:#fff;border:2px solid #d2d2d2;border-radius:2px"></div>
<svg style="position:absolute;left:397px;top:26px" width="10" height="8" viewBox="0 0 10 8"><path d="M0.5 0.5h9L5 7.5z" fill="#8a8a8a"/></svg>
<svg style="position:absolute;left:414px;top:22px" width="15" height="15" viewBox="0 0 16 16"><rect x="1" y="1.2" width="14" height="13.5" fill="#eaf0f6"/><path d="M1 1.2h7.6c-1.4 3-2 6-1.6 8.3h1.2c-.3 1.8.1 3.6.8 5.2H1z" fill="url(#gFinder)"/><rect x="4.2" y="4.3" width="1.1" height="2.4" fill="#0d1830"/><rect x="10.6" y="4.3" width="1.1" height="2.4" fill="#0d1830"/><path d="M3.6 10.6c2.5 1.7 6.3 1.7 8.8 0" fill="none" stroke="#0d1830" stroke-width="0.8"/></svg>
<div class="t" style="left:436.6px;top:23.74px;font-size:13.3px;line-height:13.3px;color:#000;font-weight:bold;">Lancer l’application</div>
<svg style="position:absolute;left:1255px;top:25px" width="8" height="8" viewBox="0 0 8 8"><path d="M1 1l6 6M7 1L1 7" stroke="#606060" stroke-width="1.1"/></svg>
<div style="position:absolute;left:398px;top:41px;width:866px;height:2px;background:#ebebeb;"></div>
<div style="position:absolute;left:404px;top:52px;width:170px;height:17px;box-sizing:border-box;border-radius:4px;background:#fff;box-shadow:0 0 0 0.5px #b9b9b9,0 0.8px 1px rgba(0,0,0,0.2);overflow:hidden"><div style="position:absolute;right:0;top:0;width:15px;height:17px;background:linear-gradient(#50a8fc,#1a7ef5)"></div></div>
<svg style="position:absolute;left:562px;top:55px" width="9" height="12" viewBox="0 0 9 12"><path d="M1.5 4.5L4.5 1.5 7.5 4.5M1.5 7.5L4.5 10.5 7.5 7.5" fill="none" stroke="#fff" stroke-width="1.2"/></svg>
<svg style="position:absolute;left:412px;top:54px" width="15" height="15" viewBox="0 0 16 16"><rect x="1.5" y="1" width="13" height="10" rx="1" fill="url(#gSys)" stroke="#555" stroke-width="0.5"/><circle cx="8" cy="5.8" r="3.4" fill="#1e1e1e" stroke="#ccc" stroke-width="0.6"/><circle cx="8" cy="5.8" r="1.3" fill="#bbb"/><path d="M1 10.5h14l-1 4.5H2z" fill="#d0d0d0" stroke="#888" stroke-width="0.5"/><path d="M3 12.5h10" stroke="#999" stroke-width="0.5"/></svg>
<div class="t" style="left:432.5px;top:55.59px;font-size:11.83px;line-height:11.83px;color:#111;">Transfert d’images</div>
<div style="position:absolute;left:398px;top:78px;width:866px;height:2px;background:#ebebeb;"></div>
<div class="t" style="left:421.6px;top:85.52px;font-size:11.55px;line-height:11.55px;color:#595959;font-weight:bold;">Résultats</div>
<div class="t" style="left:490.3px;top:85.65px;font-size:11.4px;line-height:11.4px;color:#595959;font-weight:bold;">Options</div>
<div style="position:absolute;left:389px;top:119px;width:884px;height:208px;box-sizing:border-box;background:#fff;border:2px solid #d2d2d2;border-radius:2px"></div>
<svg style="position:absolute;left:397px;top:129px" width="10" height="8" viewBox="0 0 10 8"><path d="M0.5 0.5h9L5 7.5z" fill="#8a8a8a"/></svg>
<svg style="position:absolute;left:414px;top:125px" width="15" height="15" viewBox="0 0 16 16"><ellipse cx="7" cy="3.4" rx="3.6" ry="2.7" fill="#d8d8d8" stroke="#444" stroke-width="0.8"/><ellipse cx="7" cy="3.4" rx="2.3" ry="1.6" fill="#2b8ff0"/><rect x="5.8" y="6" width="2.4" height="1.4" fill="#111"/><path d="M4 9c0-1.2 1-1.8 3-1.8s3.2.6 3.2 1.8v4H4z" fill="#e8e8ee" stroke="#222" stroke-width="0.8"/><path d="M3.6 8.3c-1.4 1-1.6 3.4-.2 4.6" fill="none" stroke="#000" stroke-width="1.6"/><path d="M1.2 15.2L15.2 5.8" stroke="#0e0e18" stroke-width="3"/><path d="M2 14.3L14.6 5.8" stroke="#7a7ab0" stroke-width="0.7"/><path d="M4.5 14h6" stroke="#444" stroke-width="1"/></svg>
<div class="t" style="left:436.6px;top:126.74px;font-size:13.3px;line-height:13.3px;color:#000;font-weight:bold;">Observer mes actions</div>
<svg style="position:absolute;left:1255px;top:128px" width="8" height="8" viewBox="0 0 8 8"><path d="M1 1l6 6M7 1L1 7" stroke="#606060" stroke-width="1.1"/></svg>
<div style="position:absolute;left:398px;top:144px;width:866px;height:2px;background:#ebebeb;"></div>
<div style="position:absolute;left:404px;top:155px;width:606px;height:137px;box-sizing:border-box;border:1px solid #c9c9c9;background:#fff;overflow:hidden">
<div style="position:absolute;left:19px;top:2px;width:1px;height:17px;background:#e0e0e0"></div>
<div class="t" style="left:25px;top:5.32px;font-size:11.2px;line-height:11.2px;color:#4a4a4a;">Événements</div>
<div style="position:absolute;left:0px;top:21px;width:606px;height:20px;background:#dcdcdc;"></div>
<svg style="position:absolute;left:2px;top:23px" width="16" height="16" viewBox="0 0 16 16"><ellipse cx="8.4" cy="12.2" rx="7.4" ry="3.1" fill="#141414"/><path d="M2.2 11.5C2 7 3.5 3.8 7.2 3.7c3.8-.1 5.8 2.6 6.2 7.3z" fill="#1e1e1e"/><path d="M3 10.6c3 1.6 7.5 1.6 10.6 0.2l.3 2c-3 1.8-8 1.8-10.9.2z" fill="#4e2286"/><ellipse cx="5" cy="6.6" rx="2.2" ry="2.4" fill="#8a8a8a" opacity="0.75"/><ellipse cx="5" cy="6.8" rx="1.2" ry="1.4" fill="#2a2a2a"/><path d="M3.2 15.3l1.6-4.8" stroke="#5a4020" stroke-width="0.9"/></svg>
<div class="t" style="left:23.5px;top:25.79px;font-size:13.6px;line-height:13.6px;color:#111;">Type 'transfer'</div>
<div style="position:absolute;left:0px;top:41px;width:606px;height:19px;background:#f5f5f5;"></div>
<svg style="position:absolute;left:2px;top:42px" width="16" height="16" viewBox="0 0 16 16"><ellipse cx="8.4" cy="12.2" rx="7.4" ry="3.1" fill="#141414"/><path d="M2.2 11.5C2 7 3.5 3.8 7.2 3.7c3.8-.1 5.8 2.6 6.2 7.3z" fill="#1e1e1e"/><path d="M3 10.6c3 1.6 7.5 1.6 10.6 0.2l.3 2c-3 1.8-8 1.8-10.9.2z" fill="#4e2286"/><ellipse cx="5" cy="6.6" rx="2.2" ry="2.4" fill="#8a8a8a" opacity="0.75"/><ellipse cx="5" cy="6.8" rx="1.2" ry="1.4" fill="#2a2a2a"/><path d="M3.2 15.3l1.6-4.8" stroke="#5a4020" stroke-width="0.9"/></svg>
<div class="t" style="left:23.5px;top:44.79px;font-size:13.6px;line-height:13.6px;color:#111;">Press Return</div>
<div style="position:absolute;left:0px;top:60px;width:606px;height:19px;background:#fff;"></div>
<div class="t" style="left:23.5px;top:63.79px;font-size:13.6px;line-height:13.6px;color:#111;">Cliquez sur le bouton &lt;fill in title&gt;.</div>
<div style="position:absolute;left:0px;top:79px;width:606px;height:19px;background:#f5f5f5;"></div>
<div class="t" style="left:23.5px;top:82.79px;font-size:13.6px;line-height:13.6px;color:#111;">Cliquez sur le bouton Numériser.</div>
<div style="position:absolute;left:0px;top:98px;width:606px;height:19px;background:#fff;"></div>
<div class="t" style="left:23.5px;top:101.79px;font-size:13.6px;line-height:13.6px;color:#111;">Cliquez sur le bouton Numériser.</div>
<div style="position:absolute;left:0px;top:117px;width:606px;height:19px;background:#f5f5f5;"></div>
<div class="t" style="left:23.5px;top:120.79px;font-size:13.6px;line-height:13.6px;color:#111;">Cliquez sur le menu Fenêtre.</div>
</div>
<div class="t" style="right:140.5999999999999px;top:156.18px;font-size:11.6px;line-height:11.6px;color:#111;font-weight:bold;">Application</div>
<div class="t" style="left:1152.3px;top:156.05px;font-size:11.75px;line-height:11.75px;color:#111;">Alfred 2</div>
<div class="t" style="right:140.5999999999999px;top:173.94px;font-size:11.65px;line-height:11.65px;color:#111;font-weight:bold;">Action de l’utilisateur</div>
<div class="t" style="left:1152.3px;top:173.83px;font-size:11.78px;line-height:11.78px;color:#111;">Touches frappées</div>
<div class="t" style="right:140.5999999999999px;top:192.85px;font-size:11.4px;line-height:11.4px;color:#111;font-weight:bold;">Délai</div>
<div style="position:absolute;left:1152px;top:189px;width:36px;height:19px;box-sizing:border-box;border:1px solid #c4c4c4;background:#fff;"></div>
<div class="t" style="right:96px;top:193.14px;font-size:12px;line-height:12px;color:#111;">2</div>
<div style="position:absolute;left:1190px;top:190px;width:11px;height:17px;box-sizing:border-box;border-radius:5px;background:#fff;box-shadow:0 0 0 0.5px #bdbdbd,0 0.5px 1px rgba(0,0,0,0.15)"></div>
<svg style="position:absolute;left:1190px;top:191px" width="11" height="16" viewBox="0 0 11 16"><path d="M3.2 5.2L5.5 2.9 7.8 5.2M3.2 10.2L5.5 12.5 7.8 10.2" fill="none" stroke="#444" stroke-width="1.1"/></svg>
<div class="t" style="left:1207.5px;top:192.71px;font-size:11.56px;line-height:11.56px;color:#111;">secondes</div>
<div class="t" style="left:1020.2px;top:226.79px;font-size:11.83px;line-height:11.83px;color:#111;">Vitesse de lecture :</div>
<div style="position:absolute;left:1130px;top:231.3px;width:117px;height:3px;border-radius:1.5px;background:#c8c8c8;"></div>
<div style="position:absolute;left:1134.9px;top:240px;width:1px;height:3px;background:#9a9a9a;"></div>
<div style="position:absolute;left:1162.3px;top:240px;width:1px;height:3px;background:#9a9a9a;"></div>
<div style="position:absolute;left:1188.0px;top:240px;width:1px;height:3px;background:#9a9a9a;"></div>
<div style="position:absolute;left:1214.8px;top:240px;width:1px;height:3px;background:#9a9a9a;"></div>
<div style="position:absolute;left:1241.2px;top:240px;width:1px;height:3px;background:#9a9a9a;"></div>
<svg style="position:absolute;left:1181px;top:228px" width="15" height="15" viewBox="0 0 15 15"><path d="M1.5 2.5a2 2 0 0 1 2-2h8a2 2 0 0 1 2 2v4.5L7.5 13.5 1.5 7z" fill="#fff" stroke="#b5b5b5" stroke-width="0.8"/></svg>
<div class="t" style="left:1122px;top:249.09px;font-size:11px;line-height:11px;color:#111;">.1x</div>
<div class="t" style="left:1185.4px;top:249.09px;font-size:11px;line-height:11px;color:#111;">1x</div>
<div class="t" style="left:1239px;top:249.22px;font-size:10.85px;line-height:10.85px;color:#111;">10x</div>
<div style="position:absolute;left:398px;top:301px;width:866px;height:2px;background:#ebebeb;"></div>
<div class="t" style="left:421.6px;top:308.52px;font-size:11.55px;line-height:11.55px;color:#595959;font-weight:bold;">Résultats</div>
<div class="t" style="left:490.3px;top:308.65px;font-size:11.4px;line-height:11.4px;color:#595959;font-weight:bold;">Options</div>
<div style="position:absolute;left:389px;top:342px;width:884px;height:88px;box-sizing:border-box;background:#fff;border:2px solid #d2d2d2;border-radius:2px"></div>
<svg style="position:absolute;left:397px;top:352px" width="10" height="8" viewBox="0 0 10 8"><path d="M0.5 0.5h9L5 7.5z" fill="#8a8a8a"/></svg>
<svg style="position:absolute;left:414px;top:348px" width="15" height="15" viewBox="0 0 16 16"><rect x="1" y="1.2" width="14" height="13.5" fill="#eaf0f6"/><path d="M1 1.2h7.6c-1.4 3-2 6-1.6 8.3h1.2c-.3 1.8.1 3.6.8 5.2H1z" fill="url(#gFinder)"/><rect x="4.2" y="4.3" width="1.1" height="2.4" fill="#0d1830"/><rect x="10.6" y="4.3" width="1.1" height="2.4" fill="#0d1830"/><path d="M3.6 10.6c2.5 1.7 6.3 1.7 8.8 0" fill="none" stroke="#0d1830" stroke-width="0.8"/></svg>
<div class="t" style="left:436.6px;top:349.74px;font-size:13.3px;line-height:13.3px;color:#000;font-weight:bold;">Lancer l’application</div>
<svg style="position:absolute;left:1255px;top:351px" width="8" height="8" viewBox="0 0 8 8"><path d="M1 1l6 6M7 1L1 7" stroke="#606060" stroke-width="1.1"/></svg>
<div style="position:absolute;left:398px;top:367px;width:866px;height:2px;background:#ebebeb;"></div>
<div style="position:absolute;left:404px;top:378px;width:170px;height:17px;box-sizing:border-box;border-radius:4px;background:#fff;box-shadow:0 0 0 0.5px #b9b9b9,0 0.8px 1px rgba(0,0,0,0.2);overflow:hidden"><div style="position:absolute;right:0;top:0;width:15px;height:17px;background:linear-gradient(#50a8fc,#1a7ef5)"></div></div>
<svg style="position:absolute;left:562px;top:381px" width="9" height="12" viewBox="0 0 9 12"><path d="M1.5 4.5L4.5 1.5 7.5 4.5M1.5 7.5L4.5 10.5 7.5 7.5" fill="none" stroke="#fff" stroke-width="1.2"/></svg>
<svg style="position:absolute;left:412px;top:380px" width="15" height="15" viewBox="0 0 16 16"><rect x="1.5" y="1" width="13" height="10" rx="1" fill="url(#gSys)" stroke="#555" stroke-width="0.5"/><circle cx="8" cy="5.8" r="3.4" fill="#1e1e1e" stroke="#ccc" stroke-width="0.6"/><circle cx="8" cy="5.8" r="1.3" fill="#bbb"/><path d="M1 10.5h14l-1 4.5H2z" fill="#d0d0d0" stroke="#888" stroke-width="0.5"/><path d="M3 12.5h10" stroke="#999" stroke-width="0.5"/></svg>
<div class="t" style="left:432.5px;top:381.59px;font-size:11.83px;line-height:11.83px;color:#111;">Transfert d’images</div>
<div style="position:absolute;left:398px;top:404px;width:866px;height:2px;background:#ebebeb;"></div>
<div class="t" style="left:421.6px;top:411.52px;font-size:11.55px;line-height:11.55px;color:#595959;font-weight:bold;">Résultats</div>
<div class="t" style="left:490.3px;top:411.65px;font-size:11.4px;line-height:11.4px;color:#595959;font-weight:bold;">Options</div>
<div style="position:absolute;left:389px;top:445px;width:884px;height:208px;box-sizing:border-box;background:#fff;border:2px solid #0b65d9;border-radius:2px"></div>
<svg style="position:absolute;left:397px;top:455px" width="10" height="8" viewBox="0 0 10 8"><path d="M0.5 0.5h9L5 7.5z" fill="#8a8a8a"/></svg>
<svg style="position:absolute;left:414px;top:451px" width="15" height="15" viewBox="0 0 16 16"><ellipse cx="7" cy="3.4" rx="3.6" ry="2.7" fill="#d8d8d8" stroke="#444" stroke-width="0.8"/><ellipse cx="7" cy="3.4" rx="2.3" ry="1.6" fill="#2b8ff0"/><rect x="5.8" y="6" width="2.4" height="1.4" fill="#111"/><path d="M4 9c0-1.2 1-1.8 3-1.8s3.2.6 3.2 1.8v4H4z" fill="#e8e8ee" stroke="#222" stroke-width="0.8"/><path d="M3.6 8.3c-1.4 1-1.6 3.4-.2 4.6" fill="none" stroke="#000" stroke-width="1.6"/><path d="M1.2 15.2L15.2 5.8" stroke="#0e0e18" stroke-width="3"/><path d="M2 14.3L14.6 5.8" stroke="#7a7ab0" stroke-width="0.7"/><path d="M4.5 14h6" stroke="#444" stroke-width="1"/></svg>
<div class="t" style="left:436.6px;top:452.74px;font-size:13.3px;line-height:13.3px;color:#000;font-weight:bold;">Observer mes actions</div>
<svg style="position:absolute;left:1255px;top:454px" width="8" height="8" viewBox="0 0 8 8"><path d="M1 1l6 6M7 1L1 7" stroke="#606060" stroke-width="1.1"/></svg>
<div style="position:absolute;left:398px;top:470px;width:866px;height:2px;background:#ebebeb;"></div>
<div style="position:absolute;left:404px;top:481px;width:606px;height:137px;box-sizing:border-box;border:1px solid #c9c9c9;background:#fff;overflow:hidden">
<div style="position:absolute;left:19px;top:2px;width:1px;height:17px;background:#e0e0e0"></div>
<div class="t" style="left:25px;top:5.32px;font-size:11.2px;line-height:11.2px;color:#4a4a4a;">Événements</div>
<div style="position:absolute;left:0px;top:21px;width:606px;height:20px;background:#dcdcdc;"></div>
<svg style="position:absolute;left:2px;top:23px" width="16" height="16" viewBox="0 0 16 16"><ellipse cx="8.4" cy="12.2" rx="7.4" ry="3.1" fill="#141414"/><path d="M2.2 11.5C2 7 3.5 3.8 7.2 3.7c3.8-.1 5.8 2.6 6.2 7.3z" fill="#1e1e1e"/><path d="M3 10.6c3 1.6 7.5 1.6 10.6 0.2l.3 2c-3 1.8-8 1.8-10.9.2z" fill="#4e2286"/><ellipse cx="5" cy="6.6" rx="2.2" ry="2.4" fill="#8a8a8a" opacity="0.75"/><ellipse cx="5" cy="6.8" rx="1.2" ry="1.4" fill="#2a2a2a"/><path d="M3.2 15.3l1.6-4.8" stroke="#5a4020" stroke-width="0.9"/></svg>
<div class="t" style="left:23.5px;top:25.79px;font-size:13.6px;line-height:13.6px;color:#111;">Type 'transfer'</div>
<div style="position:absolute;left:0px;top:41px;width:606px;height:19px;background:#f5f5f5;"></div>
<svg style="position:absolute;left:2px;top:42px" width="16" height="16" viewBox="0 0 16 16"><ellipse cx="8.4" cy="12.2" rx="7.4" ry="3.1" fill="#141414"/><path d="M2.2 11.5C2 7 3.5 3.8 7.2 3.7c3.8-.1 5.8 2.6 6.2 7.3z" fill="#1e1e1e"/><path d="M3 10.6c3 1.6 7.5 1.6 10.6 0.2l.3 2c-3 1.8-8 1.8-10.9.2z" fill="#4e2286"/><ellipse cx="5" cy="6.6" rx="2.2" ry="2.4" fill="#8a8a8a" opacity="0.75"/><ellipse cx="5" cy="6.8" rx="1.2" ry="1.4" fill="#2a2a2a"/><path d="M3.2 15.3l1.6-4.8" stroke="#5a4020" stroke-width="0.9"/></svg>
<div class="t" style="left:23.5px;top:44.79px;font-size:13.6px;line-height:13.6px;color:#111;">Press Return</div>
<div style="position:absolute;left:0px;top:60px;width:606px;height:19px;background:#fff;"></div>
<div class="t" style="left:23.5px;top:63.79px;font-size:13.6px;line-height:13.6px;color:#111;">Cliquez sur le bouton &lt;fill in title&gt;.</div>
<div style="position:absolute;left:0px;top:79px;width:606px;height:19px;background:#f5f5f5;"></div>
<div class="t" style="left:23.5px;top:82.79px;font-size:13.6px;line-height:13.6px;color:#111;">Cliquez sur le bouton Numériser.</div>
<div style="position:absolute;left:0px;top:98px;width:606px;height:19px;background:#fff;"></div>
<div class="t" style="left:23.5px;top:101.79px;font-size:13.6px;line-height:13.6px;color:#111;">Cliquez sur le bouton Numériser.</div>
<div style="position:absolute;left:0px;top:117px;width:606px;height:19px;background:#f5f5f5;"></div>
<div class="t" style="left:23.5px;top:120.79px;font-size:13.6px;line-height:13.6px;color:#111;">Cliquez sur le menu Fenêtre.</div>
</div>
<div class="t" style="right:140.5999999999999px;top:482.18px;font-size:11.6px;line-height:11.6px;color:#111;font-weight:bold;">Application</div>
<div class="t" style="left:1152.3px;top:482.05px;font-size:11.75px;line-height:11.75px;color:#111;">Alfred 2</div>
<div class="t" style="right:140.5999999999999px;top:499.94px;font-size:11.65px;line-height:11.65px;color:#111;font-weight:bold;">Action de l’utilisateur</div>
<div class="t" style="left:1152.3px;top:499.83px;font-size:11.78px;line-height:11.78px;color:#111;">Touches frappées</div>
<div class="t" style="right:140.5999999999999px;top:518.85px;font-size:11.4px;line-height:11.4px;color:#111;font-weight:bold;">Délai</div>
<div style="position:absolute;left:1152px;top:515px;width:36px;height:19px;box-sizing:border-box;border:1px solid #c4c4c4;background:#fff;"></div>
<div class="t" style="right:96px;top:519.14px;font-size:12px;line-height:12px;color:#111;">2</div>
<div style="position:absolute;left:1190px;top:516px;width:11px;height:17px;box-sizing:border-box;border-radius:5px;background:#fff;box-shadow:0 0 0 0.5px #bdbdbd,0 0.5px 1px rgba(0,0,0,0.15)"></div>
<svg style="position:absolute;left:1190px;top:517px" width="11" height="16" viewBox="0 0 11 16"><path d="M3.2 5.2L5.5 2.9 7.8 5.2M3.2 10.2L5.5 12.5 7.8 10.2" fill="none" stroke="#444" stroke-width="1.1"/></svg>
<div class="t" style="left:1207.5px;top:518.71px;font-size:11.56px;line-height:11.56px;color:#111;">secondes</div>
<div class="t" style="left:1020.2px;top:552.79px;font-size:11.83px;line-height:11.83px;color:#111;">Vitesse de lecture :</div>
<div style="position:absolute;left:1130px;top:557.3px;width:117px;height:3px;border-radius:1.5px;background:#c8c8c8;"></div>
<div style="position:absolute;left:1134.9px;top:566px;width:1px;height:3px;background:#9a9a9a;"></div>
<div style="position:absolute;left:1162.3px;top:566px;width:1px;height:3px;background:#9a9a9a;"></div>
<div style="position:absolute;left:1188.0px;top:566px;width:1px;height:3px;background:#9a9a9a;"></div>
<div style="position:absolute;left:1214.8px;top:566px;width:1px;height:3px;background:#9a9a9a;"></div>
<div style="position:absolute;left:1241.2px;top:566px;width:1px;height:3px;background:#9a9a9a;"></div>
<svg style="position:absolute;left:1181px;top:554px" width="15" height="15" viewBox="0 0 15 15"><path d="M1.5 2.5a2 2 0 0 1 2-2h8a2 2 0 0 1 2 2v4.5L7.5 13.5 1.5 7z" fill="#fff" stroke="#b5b5b5" stroke-width="0.8"/></svg>
<div class="t" style="left:1122px;top:575.09px;font-size:11px;line-height:11px;color:#111;">.1x</div>
<div class="t" style="left:1185.4px;top:575.09px;font-size:11px;line-height:11px;color:#111;">1x</div>
<div class="t" style="left:1239px;top:575.22px;font-size:10.85px;line-height:10.85px;color:#111;">10x</div>
<div style="position:absolute;left:398px;top:627px;width:866px;height:2px;background:#ebebeb;"></div>
<div class="t" style="left:421.6px;top:634.52px;font-size:11.55px;line-height:11.55px;color:#595959;font-weight:bold;">Résultats</div>
<div class="t" style="left:490.3px;top:634.65px;font-size:11.4px;line-height:11.4px;color:#595959;font-weight:bold;">Options</div>
<svg style="position:absolute;left:0;top:0" width="1280" height="491" viewBox="0 131 1280 491"><path d="M819 251 A12 12 0 0 1 843 251 V252.6 H819 Z" fill="#fff"/><path d="M818.5 252 Q819 251 819.2 250 A11.9 11.9 0 0 1 842.8 250 Q843 251 843.5 252" fill="none" stroke="#ababab" stroke-width="1.1"/><path d="M819.5 232.4 H842.5 V234 L831 243.6 L819.5 234 Z" fill="#fff"/><path d="M818.6 234 L831 243.8 L843.4 234" fill="none" stroke="#a9a9a9" stroke-width="1.1"/><path d="M819 474 A12 12 0 0 1 843 474 V475.6 H819 Z" fill="#fff"/><path d="M818.5 475 Q819 474 819.2 473 A11.9 11.9 0 0 1 842.8 473 Q843 474 843.5 475" fill="none" stroke="#ababab" stroke-width="1.1"/><path d="M819.5 455.4 H842.5 V457 L831 466.6 L819.5 457 Z" fill="#fff"/><path d="M818.6 457 L831 466.8 L843.4 457" fill="none" stroke="#a9a9a9" stroke-width="1.1"/><path d="M819 577 A12 12 0 0 1 843 577 V578.6 H819 Z" fill="#fff"/><path d="M818.5 578 Q819 577 819.2 576 A11.9 11.9 0 0 1 842.8 576 Q843 577 843.5 578" fill="none" stroke="#0b65d9" stroke-width="1.8"/><path d="M819.5 558.4 H842.5 V560 L831 569.6 L819.5 560 Z" fill="#fff"/><path d="M818.6 560 L831 569.8 L843.4 560" fill="none" stroke="#a9a9a9" stroke-width="1.1"/></svg>
</div>
<div style="position:absolute;left:382px;top:130px;width:898px;height:2px;background:#b1b1b1;"></div>
<div style="position:absolute;left:382px;top:622px;width:898px;height:1px;background:#b3b3b3;"></div>
<div style="position:absolute;left:382px;top:623px;width:898px;height:129px;background:#fff;"></div>
<div class="t" style="left:386.6px;top:627.60px;font-size:11.7px;line-height:11.7px;color:#555;">Historique</div>
<div class="t" style="left:1184.4px;top:627.60px;font-size:11.7px;line-height:11.7px;color:#555;">Durée</div>
<div style="position:absolute;left:1179px;top:626px;width:1px;height:17px;background:#e2e2e2;"></div>
<div style="position:absolute;left:382px;top:645px;width:898px;height:1px;background:#d6d6d6;"></div>
<div style="position:absolute;left:382px;top:665px;width:898px;height:19px;background:#f4f4f4;"></div>
<div style="position:absolute;left:382px;top:703px;width:898px;height:19px;background:#f4f4f4;"></div>
<div style="position:absolute;left:382px;top:741px;width:898px;height:19px;background:#f4f4f4;"></div>
<div style="position:absolute;left:1179px;top:646px;width:1px;height:106px;background:#d0d0d0;"></div>
<div style="position:absolute;left:382px;top:752px;width:898px;height:21px;background:#efefef;"></div>
<svg style="position:absolute;left:392px;top:757px" width="14" height="13" viewBox="0 0 14 13"><rect x="0.75" y="0.75" width="12.5" height="11.5" fill="none" stroke="#1a7bf2" stroke-width="1.5"/><path d="M3 4h8M3 6.5h8M3 9h8" stroke="#1a7bf2" stroke-width="1.1"/></svg>
<svg style="position:absolute;left:424px;top:757px" width="14" height="13" viewBox="0 0 14 13"><rect x="0.6" y="0.6" width="12.8" height="5" rx="2.5" fill="none" stroke="#777" stroke-width="1.1"/><rect x="0.6" y="7.4" width="12.8" height="5" rx="2.5" fill="none" stroke="#777" stroke-width="1.1"/></svg>
<div style="position:absolute;left:0px;top:0px;width:1px;height:1px;background:#000;"></div><div style="position:absolute;left:1279px;top:0px;width:1px;height:1px;background:#000;"></div><div style="position:absolute;left:0px;top:772px;width:1px;height:1px;background:#000;"></div><div style="position:absolute;left:1279px;top:772px;width:1px;height:1px;background:#000;"></div>
</body></html>
